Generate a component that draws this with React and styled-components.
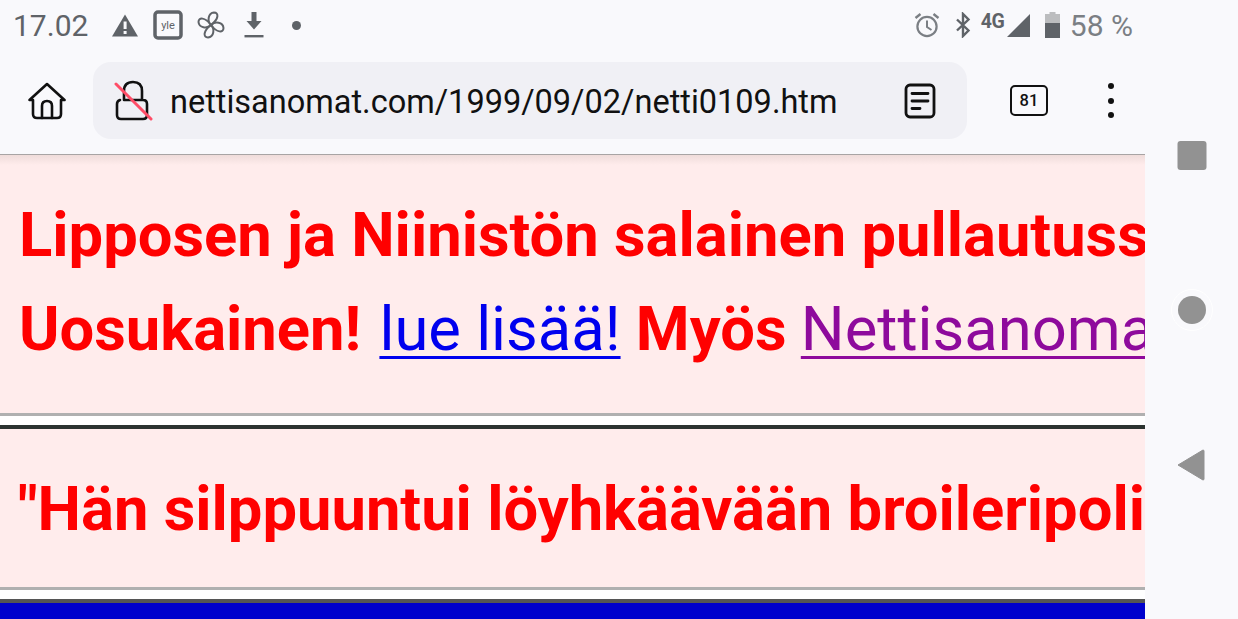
import React from 'react'
import styled, { createGlobalStyle } from 'styled-components'

const Global = createGlobalStyle`
  html, body, #root { margin: 0; padding: 0; height: 100%; }
  body { background: #f9f9fc; font-family: Roboto, "Liberation Sans", sans-serif; overflow: hidden; }
`

const Screen = styled.div`
  display: flex;
  width: 1238px;
  height: 619px;
  overflow: hidden;
  background: #f9f9fc;
`

const Phone = styled.div`
  width: 1145px;
  display: flex;
  flex-direction: column;
  overflow: hidden;
`

const NavRail = styled.div`
  flex: 1;
  position: relative;
`

const NavIcon = styled.svg`
  position: absolute;
  left: ${p => p.$left}px;
  top: ${p => p.$top}px;
`

const StatusBar = styled.div`
  height: 50px;
  display: flex;
  align-items: center;
  justify-content: space-between;
  color: #5f6368;
`

const StatusGroup = styled.div`
  display: flex;
  align-items: center;
`

const Clock = styled.span`
  font-size: 30px;
  margin-left: 13px;
  width: 98px;
`

const Network = styled.span`
  align-self: flex-start;
  width: 24px;
  margin: 4px 2px 0 0;
  font-size: 19.5px;
  line-height: 20px;
  font-weight: 700;
  letter-spacing: -0.6px;
`

const Percent = styled.span`
  font-size: 30px;
  margin-right: 12px;
  margin-left: 10px;
  color: #7b7f84;
`

const Glyph = styled.svg`
  display: block;
  flex: none;
  margin-right: ${p => p.$gap || 0}px;
`

const Toolbar = styled.div`
  height: 105px;
  display: flex;
  align-items: flex-start;
  position: relative;
  box-shadow: inset 0 -1px 0 #a8a4a4;
`

const HomeSlot = styled.div`
  width: 93px;
  height: 77px;
  margin-top: 12px;
  display: flex;
  align-items: center;
  padding-left: 28px;
  box-sizing: border-box;
`

const Omnibox = styled.div`
  width: 874px;
  height: 77px;
  margin-top: 12px;
  background: #f0f0f5;
  border-radius: 18px;
  display: flex;
  align-items: center;
  padding-left: 20px;
  box-sizing: border-box;
`

const Url = styled.span`
  font-size: 32.5px;
  color: #111;
  margin-left: 17px;
  padding-top: 2px;
  width: 735px;
  white-space: nowrap;
`

const ReaderIcon = styled.svg`
  flex: none;
  margin-left: -1px;
`

const TabCount = styled.div`
  width: 38px;
  height: 31px;
  border: 2.5px solid #111;
  border-radius: 5px;
  margin: 35px 0 0 43px;
  font-size: 16.5px;
  font-weight: 500;
  color: #111;
  display: flex;
  align-items: center;
  justify-content: center;
  flex: none;
  box-sizing: border-box;
`

const Dots = styled.div`
  margin: 33px 0 0 60px;
  display: flex;
  flex-direction: column;
  gap: 8.5px;
`

const Dot = styled.i`
  display: block;
  width: 6px;
  height: 6px;
  border-radius: 50%;
  background: #111;
`

const Content = styled.div`
  flex: 1;
  background: #fff;
  overflow: hidden;
`

const Block = styled.div`
  background: ${p => p.$top ? 'linear-gradient(#efdcda 0, #ffecec 10px)' : '#ffecec'};
  height: ${p => p.$height}px;
  padding-top: ${p => p.$pad}px;
  box-sizing: border-box;
  white-space: nowrap;
  overflow: hidden;
`

const Line = styled.div`
  font-size: 61.5px;
  line-height: 94px;
  font-weight: 700;
  color: #ff0000;
  padding-left: ${p => p.$indent || 19}px;
`

const Link = styled.a`
  font-weight: 400;
  margin-left: ${p => p.$visited ? -1 : 3}px;
  color: ${p => p.$visited ? '#8e0a9c' : '#0000ee'};
  text-decoration: underline;
  text-decoration-thickness: 3px;
  text-underline-offset: 6px;
`

const Rule = styled.div`
  background: #fff;
  border-top: 3px solid #b0b0b0;
  height: 9px;
`

const DarkRule = styled.div`
  height: 4px;
  background: ${p => p.$soft ? '#555' : '#2c3330'};
`

const Blue = styled.div`
  height: 20px;
  background: #0000cd;
`

function App() {
  return (
    <Screen>
      <Global />
      <Phone>
        <StatusBar>
          <StatusGroup>
            <Clock>17.02</Clock>
            <Glyph width="28" height="24" viewBox="0 0 28 24" $gap={14}>
              <path d="M14 1.5 L27 23.5 H1 Z" fill="#5f6368" />
              <rect x="12.6" y="8.5" width="3" height="7.5" fill="#f9f9fc" />
              <rect x="12.6" y="18" width="3" height="3" fill="#f9f9fc" />
            </Glyph>
            <Glyph width="30" height="30" viewBox="0 0 30 30" $gap={14}>
              <rect x="2" y="2" width="26" height="26" rx="3" fill="none" stroke="#5f6368" strokeWidth="3.5" />
              <text x="15" y="19" fontSize="11" textAnchor="middle" fill="#5f6368" fontFamily="Roboto">yle</text>
            </Glyph>
            <Glyph width="28" height="28" viewBox="0 0 28 28" $gap={19}>
              <g fill="none" stroke="#5f6368" strokeWidth="2" strokeLinejoin="round">
                <path d="M14 14 C10 10 11 2 17 1.5 C22 1.5 22 8 14 14 Z" />
                <path d="M14 14 C18 10 26 11 26.5 17 C26.5 22 20 22 14 14 Z" />
                <path d="M14 14 C18 18 17 26 11 26.5 C6 26.5 6 20 14 14 Z" />
                <path d="M14 14 C10 18 2 17 1.5 11 C1.5 6 8 6 14 14 Z" />
              </g>
            </Glyph>
            <Glyph width="20" height="26" viewBox="0 0 20 26" $gap={28}>
              <path d="M7.5 0 H12.5 V9 H17.5 L10 17.5 L2.5 9 H7.5 Z" fill="#5f6368" />
              <rect x="0.5" y="23" width="19" height="2.4" fill="#5f6368" />
            </Glyph>
            <Glyph width="9" height="9" viewBox="0 0 9 9">
              <circle cx="4.5" cy="4.5" r="4.5" fill="#5f6368" />
            </Glyph>
          </StatusGroup>
          <StatusGroup>
            <Glyph width="26" height="26" viewBox="0 0 26 26" $gap={15}>
              <circle cx="13" cy="14.5" r="9.6" fill="none" stroke="#7b7f84" strokeWidth="2.2" />
              <path d="M13 8.5 V15 L17.5 18" fill="none" stroke="#7b7f84" strokeWidth="2" />
              <path d="M1.5 6 L6.5 2 M24.5 6 L19.5 2" fill="none" stroke="#7b7f84" strokeWidth="2.4" />
            </Glyph>
            <Glyph width="16" height="26" viewBox="0 0 16 26" $gap={10}>
              <path d="M2 7.5 L13.5 18.5 L8 24 V2 L13.5 7.5 L2 18.5" fill="none" stroke="#5f6368" strokeWidth="2.4" />
            </Glyph>
            <Network>4G</Network>
            <Glyph width="23" height="23" viewBox="0 0 23 23" $gap={15}>
              <path d="M23 0 V23 H0 Z" fill="#5f6368" />
            </Glyph>
            <Glyph width="15" height="26" viewBox="0 0 15 26">
              <path d="M4.5 0 H10.5 V2 H15 V26 H0 V2 H4.5 Z" fill="#bcbdbf" />
              <rect x="0" y="11" width="15" height="15" fill="#5f6368" />
            </Glyph>
            <Percent>58 %</Percent>
          </StatusGroup>
        </StatusBar>
        <Toolbar>
          <HomeSlot>
            <svg width="38" height="38" viewBox="0 0 38 38" fill="none" stroke="#111" strokeWidth="2.6" strokeLinejoin="round" strokeLinecap="round">
              <path d="M1.5 18 L19 2 L36.5 18 H33 V32 Q33 36 29 36 H9 Q5 36 5 32 V18 Z" />
              <path d="M14 36 V24 Q14 19 19 19 Q24 19 24 24 V36" />
            </svg>
          </HomeSlot>
          <Omnibox>
            <svg width="40" height="42" viewBox="0 0 40 42" fill="none" strokeLinecap="round" style={{ flex: 'none' }}>
              <path d="M11 20 H30 Q34 20 34 24 V35 Q34 39 30 39 H8 Q4 39 4 35 V24 Q4 21 7 20 M11 20 V11 Q11 2 20 2 Q29 2 29 11 V20" stroke="#111" strokeWidth="2.6" />
              <path d="M3 4 L38 39" stroke="#ff4d67" strokeWidth="3" />
            </svg>
            <Url>nettisanomat.com/1999/09/02/netti0109.htm</Url>
            <ReaderIcon width="32" height="36" viewBox="0 0 32 36" fill="none" stroke="#111" strokeWidth="2.8" strokeLinecap="round">
              <rect x="2" y="2" width="28" height="32" rx="4" />
              <path d="M8 10.5 H24 M8 18 H24 M8 25.5 H16" />
            </ReaderIcon>
          </Omnibox>
          <TabCount>81</TabCount>
          <Dots>
            <Dot />
            <Dot />
            <Dot />
          </Dots>
        </Toolbar>
        <Content>
          <Block $top $height={258} $pad={33}>
            <Line>Lipposen ja Niinistön salainen pullautuss</Line>
            <Line>
              Uosukainen! <Link href="#a">lue lisää!</Link> Myös <Link href="#b" $visited>Nettisanoma</Link>
            </Line>
          </Block>
          <Rule />
          <DarkRule />
          <Block $height={158} $pad={33}>
            <Line $indent={18}>"Hän silppuuntui löyhkäävään broileripoli</Line>
          </Block>
          <Rule />
          <DarkRule $soft />
          <Blue />
        </Content>
      </Phone>
      <NavRail>
        <NavIcon $left={32} $top={140} width="31" height="31" viewBox="0 0 31 31">
          <rect x="0.5" y="1" width="29" height="29" rx="3" fill="#929292" />
        </NavIcon>
        <NavIcon $left={25} $top={288} width="44" height="44" viewBox="0 0 44 44">
          <circle cx="22" cy="22" r="20.5" fill="none" stroke="#fff" strokeWidth="1" />
          <circle cx="22" cy="22" r="14" fill="#929292" />
        </NavIcon>
        <NavIcon $left={31} $top={448} width="30" height="34" viewBox="0 0 30 34">
          <path d="M2 17 L27 2 Q28 2 28 3 V31 Q28 32 27 32 Z" fill="#929292" stroke="#929292" strokeWidth="1" strokeLinejoin="round" />
        </NavIcon>
      </NavRail>
    </Screen>
  )
}

export default App
